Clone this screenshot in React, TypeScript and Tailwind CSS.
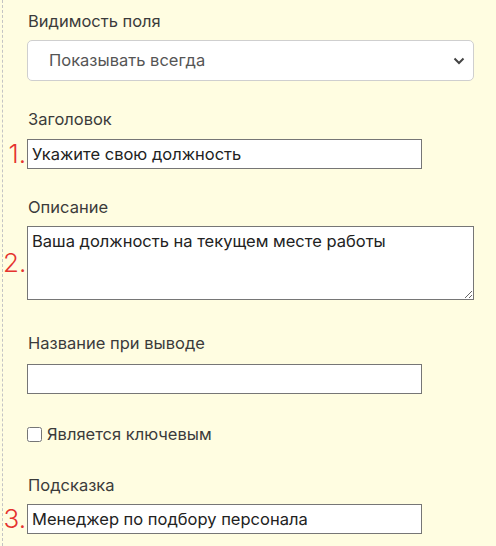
import { ReactNode } from "react";

const font = { fontFamily: "Inter, 'Noto Sans', sans-serif" };

function Marker({ n }: { n?: string }) {
  return (
    <div className="w-[24px] shrink-0 pr-[1px] text-right text-[26px] font-light leading-none text-[#e5332f]">
      {n}
    </div>
  );
}

function Label({ children, className = "" }: { children: ReactNode; className?: string }) {
  return <div className={`pl-[25px] text-[16.5px] leading-6 text-[#3b3b3b] ${className}`}>{children}</div>;
}

function TextRow({ n, value, className = "" }: { n?: string; value: string; className?: string }) {
  return (
    <div className={`flex items-center ${className}`}>
      <Marker n={n} />
      <input
        readOnly
        value={value}
        className="h-[30px] w-[395px] border border-[#767676] bg-white px-[4px] text-[16.5px] text-[#222] outline-none"
      />
    </div>
  );
}

export default function App() {
  return (
    <div className="h-[546px] w-[496px] overflow-hidden bg-[#fffde1]" style={font}>
      <div className="ml-[2px] h-full border-l border-dashed border-[#c4c4c4] pt-[9px]">
        <Label>Видимость поля</Label>
        <div className="mt-[7px] flex">
          <div className="w-[24px] shrink-0" />
          <div className="flex h-[41px] w-[447px] items-center justify-between rounded-[5px] border border-[#cfcfcf] bg-white pl-[21px] pr-[8px]">
            <span className="text-[16.5px] text-[#555]">Показывать всегда</span>
            <svg width="12" height="8" viewBox="0 0 12 8" fill="none">
              <path d="M1.5 1.5 L6 6 L10.5 1.5" stroke="#444" strokeWidth="2" />
            </svg>
          </div>
        </div>

        <Label className="mt-[26px]">Заголовок</Label>
        <TextRow n="1." value="Укажите свою должность" className="mt-[8px]" />

        <Label className="mt-[26px]">Описание</Label>
        <div className="mt-[7px] flex items-center">
          <Marker n="2." />
          <textarea
            readOnly
            value="Ваша должность на текущем месте работы"
            className="h-[74px] w-[447px] resize border border-[#767676] bg-white px-[4px] pt-[4px] text-[16.5px] leading-5 text-[#222] outline-none"
          />
        </div>

        <Label className="mt-[31px]">Название при выводе</Label>
        <TextRow value="" className="mt-[9px]" />

        <label className="mt-[28px] flex items-center pl-[24px] text-[16.5px] leading-6 text-[#3b3b3b]">
          <input type="checkbox" className="mr-[5px] h-[15px] w-[15px]" />
          Является ключевым
        </label>

        <Label className="mt-[27px]">Подсказка</Label>
        <TextRow n="3." value="Менеджер по подбору персонала" className="mt-[7px]" />
      </div>
    </div>
  );
}
